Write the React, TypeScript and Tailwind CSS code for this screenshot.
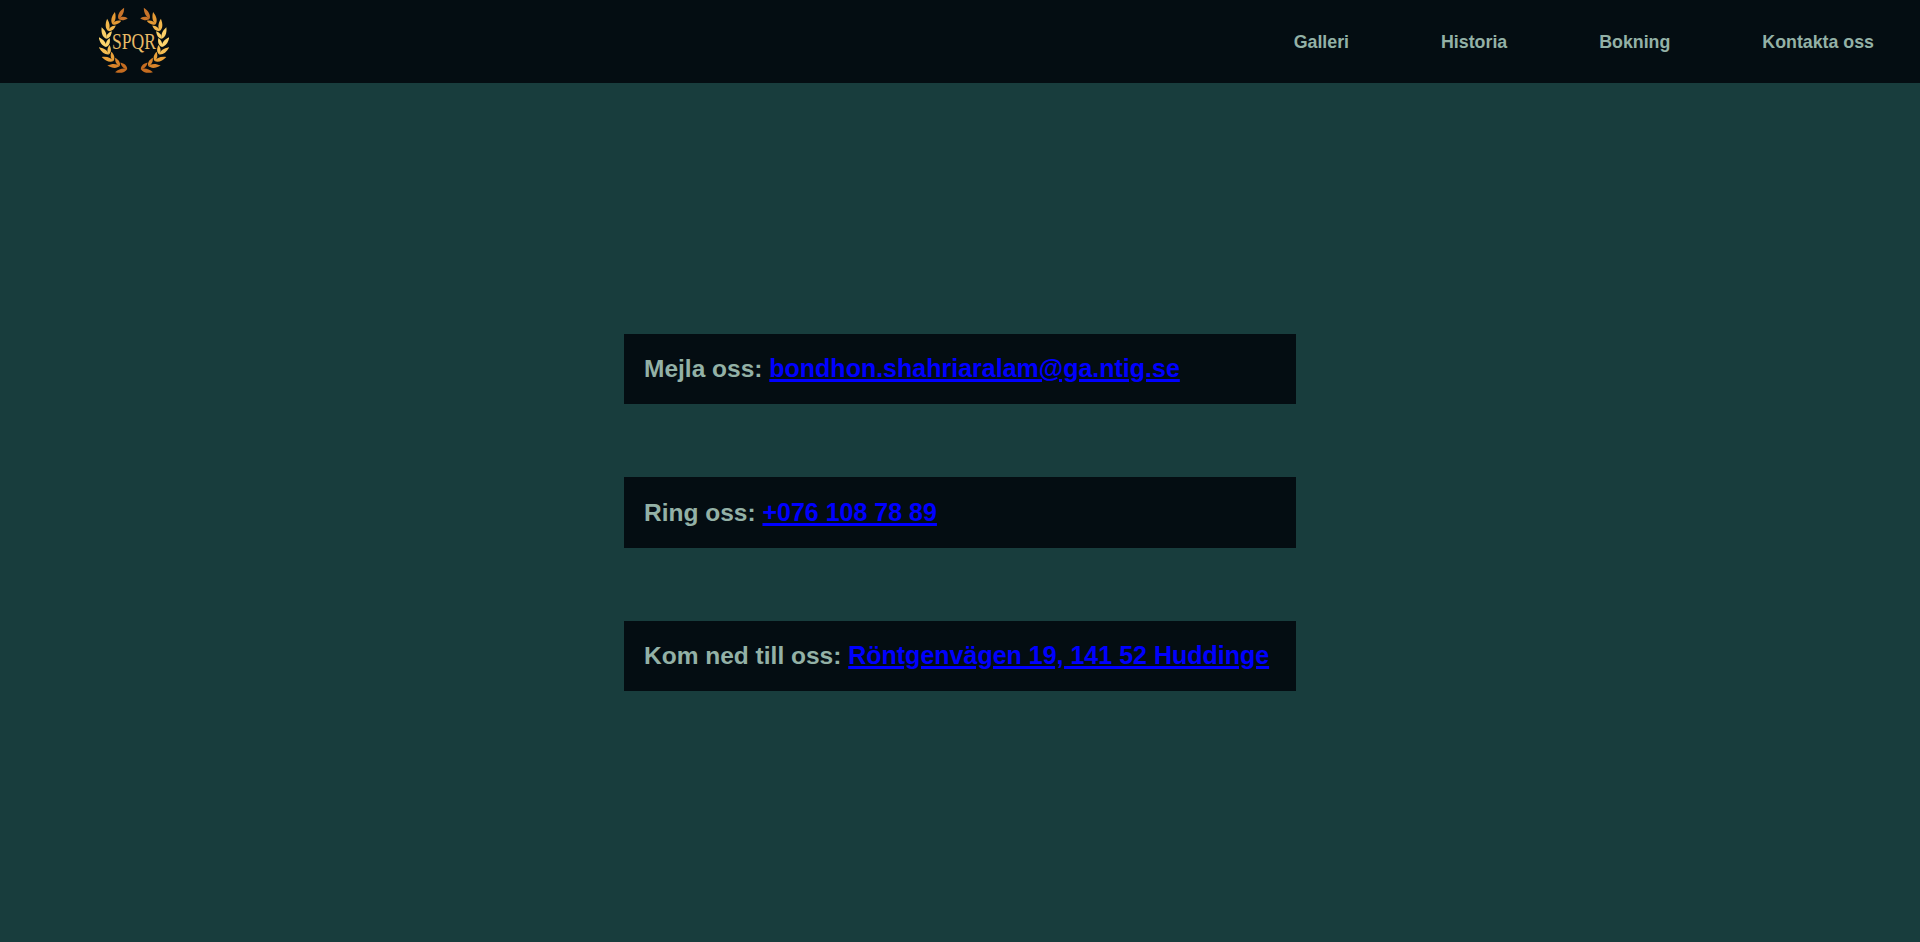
const links = ["Galleri", "Historia", "Bokning", "Kontakta oss"];

const contacts = [
  { label: "Mejla oss:", value: "bondhon.shahriaralam@ga.ntig.se" },
  { label: "Ring oss:", value: "+076 108 78 89" },
  { label: "Kom ned till oss:", value: "Röntgenvägen 19, 141 52 Huddinge" },
];

// leaf colours of one half of the wreath, bottom to top
const shades = ["#c56c20", "#d9842a", "#eaa038", "#f5bd52", "#fcd46c", "#fbd068", "#f3b84c", "#e59a34", "#c9742a"];

function Half() {
  return (
    <g>
      {shades.map((fill, i) => {
        const a = 166 - i * 16.5;
        const rad = (a * Math.PI) / 180;
        const x = 35 - 28 * Math.sin(rad);
        const y = 35 - 28 * Math.cos(rad);
        const turn = 90 - a;
        return (
          <g key={i} transform={`translate(${x.toFixed(1)} ${y.toFixed(1)})`} fill={fill}>
            <path transform={`rotate(${turn - 28})`} d="M0 0C-2.800 -3 -2.600 -7.500 0 -12.500C2.600 -7.500 2.400 -3 0 0Z" />
            <path transform={`rotate(${turn + 30})`} d="M0 0C-2.400 -2.500 -2.200 -6 0 -9.500C2.200 -6 2.400 -2.500 0 0Z" />
          </g>
        );
      })}
    </g>
  );
}

function Logo() {
  return (
    <svg width="70" height="70" viewBox="0 0 70 70" className="shrink-0">
      <Half />
      <g transform="matrix(-1 0 0 1 70 0)">
        <Half />
      </g>
      <text x="13" y="42" textLength="44" lengthAdjust="spacingAndGlyphs" fontFamily="'Liberation Serif', serif" fontSize="23" fill="#e9bb66">
        SPQR
      </text>
    </svg>
  );
}

export default function App() {
  return (
    <div className="min-h-[942px] flex flex-col bg-[#183d3d] font-['Liberation_Sans',Arial,sans-serif]">
      <header className="h-[83px] flex items-center justify-between bg-[#040d12] pl-[99px] pr-[46px]">
        <Logo />
        <nav className="flex gap-[92px] pt-px">
          {links.map((link) => (
            <a key={link} href="#" className="text-[17.8px] font-bold text-[#93b1a6]">
              {link}
            </a>
          ))}
        </nav>
      </header>
      <main className="flex-1 flex flex-col items-center justify-center gap-[73px]">
        {contacts.map((c) => (
          <p key={c.label} className="w-[672px] h-[70.5px] flex items-center px-5 bg-[#040d12] text-[24.5px] font-bold text-[#93b1a6]">
            <span className="whitespace-pre">
              {c.label}{" "}
              <a href="#" className="underline decoration-[3px] text-[25px] text-[#0000ff]">
                {c.value}
              </a>
            </span>
          </p>
        ))}
      </main>
    </div>
  );
}
